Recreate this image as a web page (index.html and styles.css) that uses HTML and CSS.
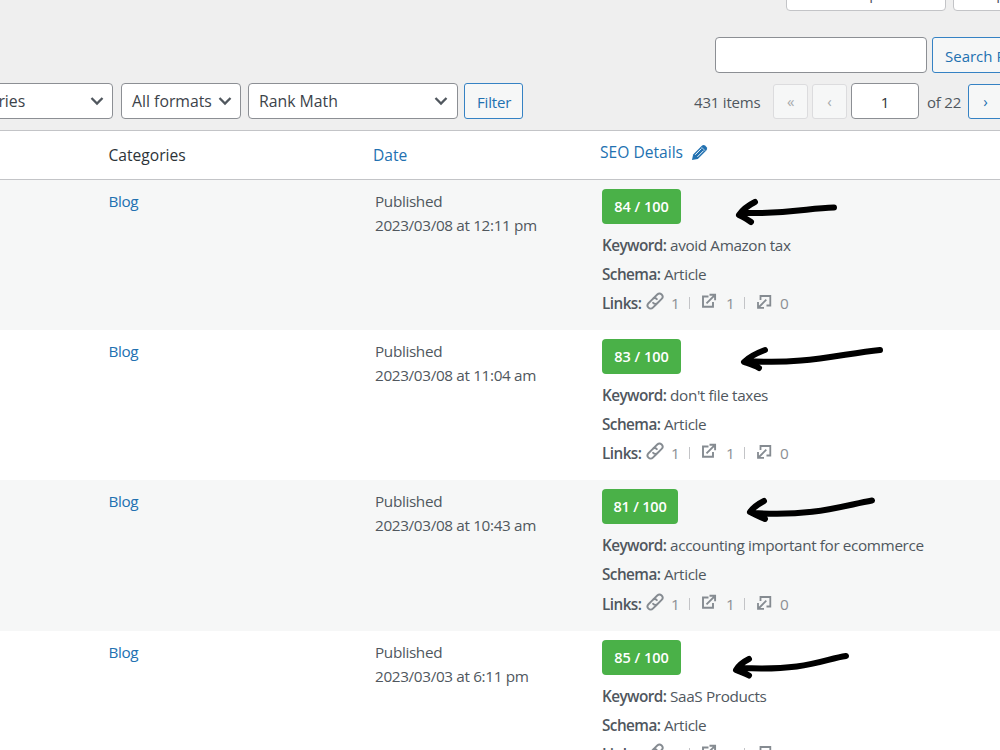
FILE: index.html
```html
<!DOCTYPE html>
<html lang="en">
<head>
<meta charset="UTF-8" />
<meta name="viewport" content="width=device-width, initial-scale=1.0"/>
<title>Posts</title>
<link rel="stylesheet" href="styles.css">
</head>
<body>
<svg class="sprite" width="0" height="0">
    <symbol id="chevron" viewBox="0 0 14 10"><path d="M1.5 2 L7 7.5 L12.5 2" fill="none" stroke="#50575e" stroke-width="2.3"/></symbol>
    <symbol id="link" viewBox="0 0 18 18">
        <g transform="rotate(-45 9 9)" fill="none" stroke="#858b91" stroke-width="1.9" stroke-linecap="round">
            <path d="M8 12.2 H2.8 A3.1 3.1 0 0 1 2.8 6 H8.6 A3 3 0 0 1 11.6 9"/>
            <path d="M10 6 H15.2 A3.1 3.1 0 0 1 15.2 12.2 H9.4 A3 3 0 0 1 6.4 9"/>
        </g>
    </symbol>
    <symbol id="external" viewBox="0 0 16 16"><path d="M7.5 3.5 H2 V13.8 H12 V9 M5.5 10.3 L13 2.8 M8.5 1.8 H14.1 V7.2" fill="none" stroke="#858b91" stroke-width="1.9"/></symbol>
    <symbol id="internal" viewBox="0 0 16 16"><path d="M4.5 6 V2 H14.3 V11.5 H10.5 M10.3 5.7 L3 13 M2 8 V13.8 H8" fill="none" stroke="#858b91" stroke-width="1.8"/></symbol>
</svg>

<div class="page">
    <div class="screen-links">
        <div class="tab options">Screen Options</div>
        <div class="tab help">Help</div>
    </div>

    <div class="search-box">
        <div class="search-input"></div>
        <div class="button search-button">Search Posts</div>
    </div>

    <div class="tablenav">
        <div class="select categories"><span>All Categories</span><svg><use href="#chevron"/></svg></div>
        <div class="select formats"><span>All formats</span><svg><use href="#chevron"/></svg></div>
        <div class="select rank"><span>Rank Math</span><svg><use href="#chevron"/></svg></div>
        <div class="button filter">Filter</div>
        <div class="pagination">
            <span class="count">431 items</span>
            <span class="page-button disabled">«</span>
            <span class="page-button disabled">‹</span>
            <span class="current">1</span>
            <span class="total">of 22</span>
            <span class="page-button next">›</span>
        </div>
    </div>

    <div class="table">
        <div class="row head">
            <div class="cat">Categories</div>
            <div class="date">Date</div>
            <div class="seo"><span>SEO Details</span>
                <svg class="pencil" viewBox="0 0 18 18"><path d="M1 17 L2.3 11 L11.2 2 Q13.2 .2 15 1.7 L16.6 3.4 Q17.9 5.2 16.2 7 L7.2 15.8 Z" fill="#2271b1"/><path d="M4.4 11.4 L11 4.8 M6.8 13.6 L13.4 7" stroke="#fff" stroke-width="1"/><path d="M11.2 3.4 L14.9 7.1" stroke="#fff" stroke-width=".7"/></svg>
            </div>
        </div>

        <div class="row odd">
            <div class="cat"><a>Blog</a></div>
            <div class="date">Published<br>2023/03/08 at 12:11 pm</div>
            <div class="seo">
                <div class="score">84 / 100</div>
                <div class="line"><b>Keyword:</b> <span>avoid Amazon tax</span></div>
                <div class="line"><b>Schema:</b> <span>Article</span></div>
                <div class="line links"><b>Links:</b><svg class="i-link"><use href="#link"/></svg><i>1</i><em></em><svg class="i-ext"><use href="#external"/></svg><i>1</i><em></em><svg class="i-int"><use href="#internal"/></svg><i>0</i></div>
            </div>
        </div>

        <div class="row">
            <div class="cat"><a>Blog</a></div>
            <div class="date">Published<br>2023/03/08 at 11:04 am</div>
            <div class="seo">
                <div class="score">83 / 100</div>
                <div class="line"><b>Keyword:</b> <span>don't file taxes</span></div>
                <div class="line"><b>Schema:</b> <span>Article</span></div>
                <div class="line links"><b>Links:</b><svg class="i-link"><use href="#link"/></svg><i>1</i><em></em><svg class="i-ext"><use href="#external"/></svg><i>1</i><em></em><svg class="i-int"><use href="#internal"/></svg><i>0</i></div>
            </div>
        </div>

        <div class="row odd">
            <div class="cat"><a>Blog</a></div>
            <div class="date">Published<br>2023/03/08 at 10:43 am</div>
            <div class="seo">
                <div class="score narrow">81 / 100</div>
                <div class="line"><b>Keyword:</b> <span>accounting important for ecommerce</span></div>
                <div class="line"><b>Schema:</b> <span>Article</span></div>
                <div class="line links"><b>Links:</b><svg class="i-link"><use href="#link"/></svg><i>1</i><em></em><svg class="i-ext"><use href="#external"/></svg><i>1</i><em></em><svg class="i-int"><use href="#internal"/></svg><i>0</i></div>
            </div>
        </div>

        <div class="row">
            <div class="cat"><a>Blog</a></div>
            <div class="date">Published<br>2023/03/03 at 6:11 pm</div>
            <div class="seo">
                <div class="score">85 / 100</div>
                <div class="line"><b>Keyword:</b> <span>SaaS Products</span></div>
                <div class="line"><b>Schema:</b> <span>Article</span></div>
                <div class="line links"><b>Links:</b><svg class="i-link"><use href="#link"/></svg><i>1</i><em></em><svg class="i-ext"><use href="#external"/></svg><i>1</i><em></em><svg class="i-int"><use href="#internal"/></svg><i>0</i></div>
            </div>
        </div>
    </div>

    <!-- hand-drawn arrows over the scores -->
    <svg class="arrows" viewBox="0 0 1000 750">
        <path d="M834 207.5 C808 208 792 214 742 213 M755 202 C749 205 743 209 739 215 C743 217 747 219 751 222"/>
        <path d="M880 350 C840 354 805 365 747 361 M765 350 C757 353 749 357 744 362 C750 364 754 365 759 368"/>
        <path d="M872 500.5 C845 505 815 517 753 513 M764 501 C758 504 753 508 750 512 C755 515 760 517 765 519"/>
        <path d="M846 656 C824 659 808 671 741 668 M749 659 C743 662 739 665 736 670 C741 672 745 673 749 675.5"/>
    </svg>
</div>
</body>
</html>
```
FILE: styles.css
```css
body {
    margin: 0;
    font-family: "Open Sans", "Noto Sans", sans-serif;
    font-size: 15px;
    color: #50575e;
}

* {
    box-sizing: border-box;
}

.sprite {
    display: block;
}

.page {
    position: relative;
    width: 1000px;
    height: 750px;
    overflow: hidden;
    background: #efefef;
}

.screen-links {
    display: flex;
    gap: 7px;
    height: 11px;
    padding-left: 786px;
}

.tab {
    flex: none;
    height: 35px;
    margin-top: -24px;
    padding-left: 19px;
    border: 1px solid #c3c4c7;
    border-radius: 0 0 4px 4px;
    background: #fff;
    line-height: 32px;
}

.options {
    width: 160px;
}

.help {
    width: 90px;
}

.search-box {
    display: flex;
    gap: 5px;
    margin-top: 26px;
    padding-left: 715px;
}

.search-input {
    flex: none;
    width: 212px;
    height: 36px;
    border: 1px solid #8c8f94;
    border-radius: 4px;
    background: #fff;
}

.button {
    flex: none;
    height: 36px;
    border: 1px solid #3582c4;
    border-radius: 3px;
    background: #f6f7f7;
    color: #2271b1;
    line-height: 36px;
    padding-left: 12px;
    white-space: nowrap;
}

.search-button {
    width: 120px;
}

.tablenav {
    display: flex;
    height: 57px;
    padding-top: 10px;
}

.select {
    flex: none;
    display: flex;
    justify-content: space-between;
    align-items: center;
    height: 36px;
    padding: 0 8px 0 9px;
    border: 1px solid #8c8f94;
    border-radius: 4px;
    background: #fff;
    color: #3c434a;
    font-size: 15.8px;
    white-space: nowrap;
}

.select span {
    margin-top: -1px;
}

.select svg {
    width: 14px;
    height: 10px;
}

.categories {
    width: 202px;
    margin-left: -89px;
    padding-left: 13px;
}

.formats {
    width: 120px;
    margin-left: 8px;
    padding-left: 10px;
}

.rank {
    width: 210px;
    margin-left: 7px;
    padding-left: 10px;
    padding-right: 9px;
}

.filter {
    width: 59px;
    margin-left: 6px;
    letter-spacing: -0.15px;
}

.pagination {
    flex: none;
    display: flex;
    margin-left: 171px;
    letter-spacing: -0.2px;
    line-height: 38px;
}

.count {
    width: 79px;
}

.page-button {
    width: 35px;
    height: 35px;
    margin: 1px 4px 0 0;
    border: 1px solid #3582c4;
    border-radius: 3px;
    background: #f6f7f7;
    color: #2271b1;
    text-align: center;
    line-height: 32px;
}

.disabled {
    border-color: #dcdcde;
    color: #a7aaad;
}

.current {
    width: 68px;
    height: 36px;
    margin-right: 8px;
    border: 1px solid #8c8f94;
    border-radius: 4px;
    background: #fff;
    color: #2c3338;
    text-align: center;
    line-height: 36px;
}

.total {
    width: 41px;
    white-space: nowrap;
}

.table {
    border-top: 1px solid #c3c4c7;
    background: #fff;
}

.row {
    display: grid;
    grid-template-columns: 375px 227px 1fr;
    height: 150.2px;
    font-size: 15.3px;
    letter-spacing: -0.38px;
    line-height: 24px;
}

.odd {
    background: #f6f7f7;
}

.cat {
    padding: 9px 0 0 108.5px;
    color: #2271b1;
}

.date {
    padding-top: 9px;
    letter-spacing: -0.35px;
}

.head {
    height: 49px;
    grid-template-columns: 373px 227px 1fr;
    border-bottom: 1px solid #c3c4c7;
    color: #2271b1;
    font-size: 15.6px;
    letter-spacing: 0;
}

.head .cat {
    padding-top: 12px;
    color: #2c3338;
}

.head .date {
    padding-top: 12px;
    letter-spacing: 0;
}

.head .seo {
    display: flex;
    padding-top: 9px;
}

.pencil {
    width: 17px;
    height: 17px;
    margin: 4px 0 0 8px;
}

.seo {
    padding-top: 9px;
}

.score {
    width: 79px;
    height: 35px;
    margin-bottom: 7px;
    border-radius: 4px;
    background: #4ab148;
    color: #fff;
    font-size: 14.5px;
    font-weight: 600;
    letter-spacing: 0;
    text-align: center;
    line-height: 36px;
}

.narrow {
    width: 76px;
    letter-spacing: -0.2px;
}

.line {
    height: 29.1px;
    line-height: 28px;
    white-space: nowrap;
}

.line b {
    font-weight: 600;
    letter-spacing: -0.55px;
}

.links {
    display: flex;
}

.links b {
    width: 44px;
}

.links svg {
    width: 16px;
    height: 16px;
    margin: 4px 1px 0 0;
}

.links .i-link {
    width: 18px;
    height: 18px;
    margin: 3px 0 0 0;
}

.links .i-int {
    margin: 5px 0 0 0;
}

.links i {
    width: 9px;
    margin-left: 7px;
    color: #8c8f94;
    font-style: normal;
}

.links em {
    width: 1px;
    height: 12px;
    margin: 8px 11px 0 9px;
    background: #c3c4c7;
}

.links .i-ext + i {
    margin-left: 8px;
}

.links .i-int + i {
    margin-left: 8px;
}

.arrows {
    position: absolute;
    left: 0;
    top: 0;
    width: 1000px;
    height: 750px;
    fill: none;
    stroke: #000;
    stroke-width: 6;
    stroke-linecap: round;
    stroke-linejoin: round;
}
```
